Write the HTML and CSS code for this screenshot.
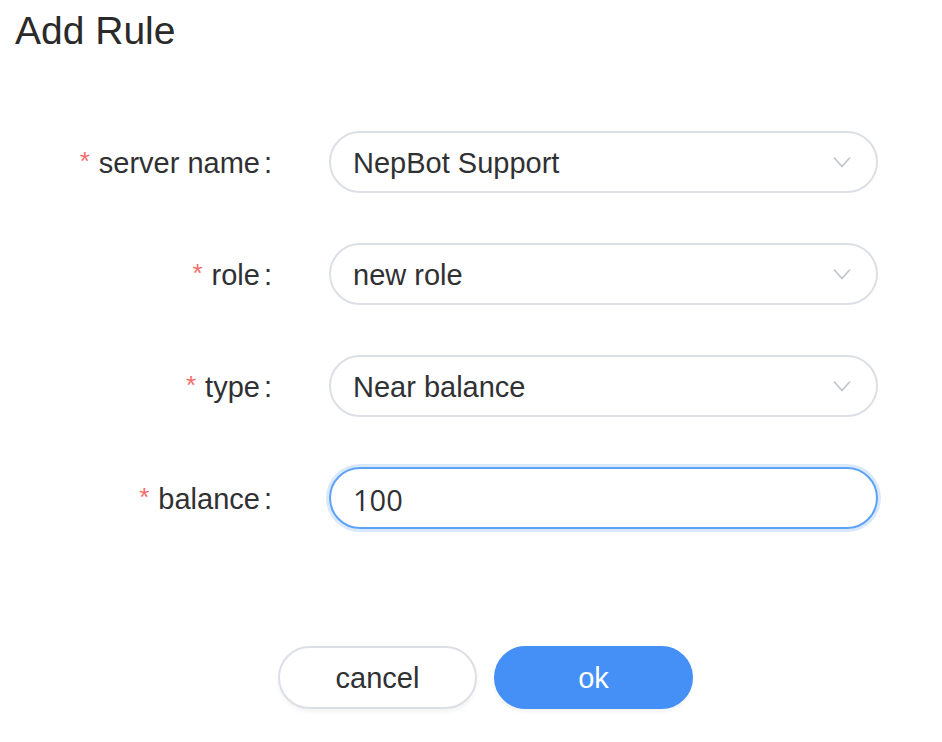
FILE: index.html
```html
<!DOCTYPE html>
<html>
<head>
<meta charset="utf-8">
<link rel="stylesheet" href="styles.css">
</head>
<body>
<div class="dialog">
  <h1 class="title">Add Rule</h1>
  <form class="form">
    <div class="row">
      <label class="label"><span class="req">*</span>server name<span class="colon">:</span></label>
      <div class="field select"><span class="value">NepBot Support</span>
        <svg class="arrow" width="18" height="12" viewBox="0 0 18 12"><path d="M1 1.5 L9 10.5 L17 1.5" fill="none" stroke="#c0c4cc" stroke-width="1.6"/></svg>
      </div>
    </div>
    <div class="row">
      <label class="label"><span class="req">*</span>role<span class="colon">:</span></label>
      <div class="field select"><span class="value">new role</span>
        <svg class="arrow" width="18" height="12" viewBox="0 0 18 12"><path d="M1 1.5 L9 10.5 L17 1.5" fill="none" stroke="#c0c4cc" stroke-width="1.6"/></svg>
      </div>
    </div>
    <div class="row">
      <label class="label"><span class="req">*</span>type<span class="colon">:</span></label>
      <div class="field select"><span class="value">Near balance</span>
        <svg class="arrow" width="18" height="12" viewBox="0 0 18 12"><path d="M1 1.5 L9 10.5 L17 1.5" fill="none" stroke="#c0c4cc" stroke-width="1.6"/></svg>
      </div>
    </div>
    <div class="row">
      <label class="label"><span class="req">*</span>balance<span class="colon">:</span></label>
      <div class="field focused"><span class="value num">100</span></div>
    </div>
  </form>
  <div class="actions">
    <button class="btn cancel" type="button">cancel</button>
    <button class="btn ok" type="button">ok</button>
  </div>
</div>
</body>
</html>
```
FILE: styles.css
```css
html, body {
  margin: 0;
  padding: 0;
  background: #fff;
}
body {
  font-family: "Liberation Sans", Arial, sans-serif;
  color: #303133;
}
.dialog {
  width: 942px;
  height: 742px;
}
.title {
  margin: 0;
  padding: 10px 0 0 15px;
  font-size: 39px;
  font-weight: 400;
  line-height: 42px;
  color: #2a2a2a;
}
.form {
  display: flex;
  flex-direction: column;
  gap: 50px;
  padding-top: 79px;
}
.row {
  display: flex;
  align-items: center;
  height: 62px;
}
.label {
  width: 272px;
  text-align: right;
  font-size: 29px;
  line-height: 34px;
  padding-top: 2px;
  color: #303133;
  margin-right: 57px;
  white-space: nowrap;
}
.req {
  color: #f56c6c;
  margin-right: 9px;
  font-size: 26px;
  position: relative;
  top: -3px;
}
.colon {
  margin-left: 4px;
}
.field {
  box-sizing: border-box;
  width: 549px;
  height: 62px;
  border: 2px solid #dcdfe6;
  border-radius: 31px;
  display: flex;
  align-items: center;
  padding: 2px 24px 0 22px;
  font-size: 29px;
  color: #303133;
}
.select {
  justify-content: space-between;
}
.arrow {
  margin-right: 1px;
  margin-top: -2px;
}
.focused {
  border-color: #5ba2f7;
  box-shadow: 0 0 0 3px #dae8fc;
}
.num {
  font-family: "Open Sans", "Noto Sans", sans-serif;
  font-size: 29px;
}
.actions {
  display: flex;
  gap: 17px;
  padding-left: 278px;
  padding-top: 117px;
}
.btn {
  box-sizing: border-box;
  width: 199px;
  height: 63px;
  border-radius: 32px;
  font-family: "Liberation Sans", Arial, sans-serif;
  font-size: 29px;
  padding-top: 3px;
  cursor: pointer;
  box-shadow: 0 3px 4px rgba(0,0,0,0.05);
}
.cancel {
  background: #fff;
  border: 2px solid #dcdfe6;
  color: #303133;
}
.ok {
  background: #4590f6;
  border: 2px solid #4590f6;
  color: #fff;
}
```
